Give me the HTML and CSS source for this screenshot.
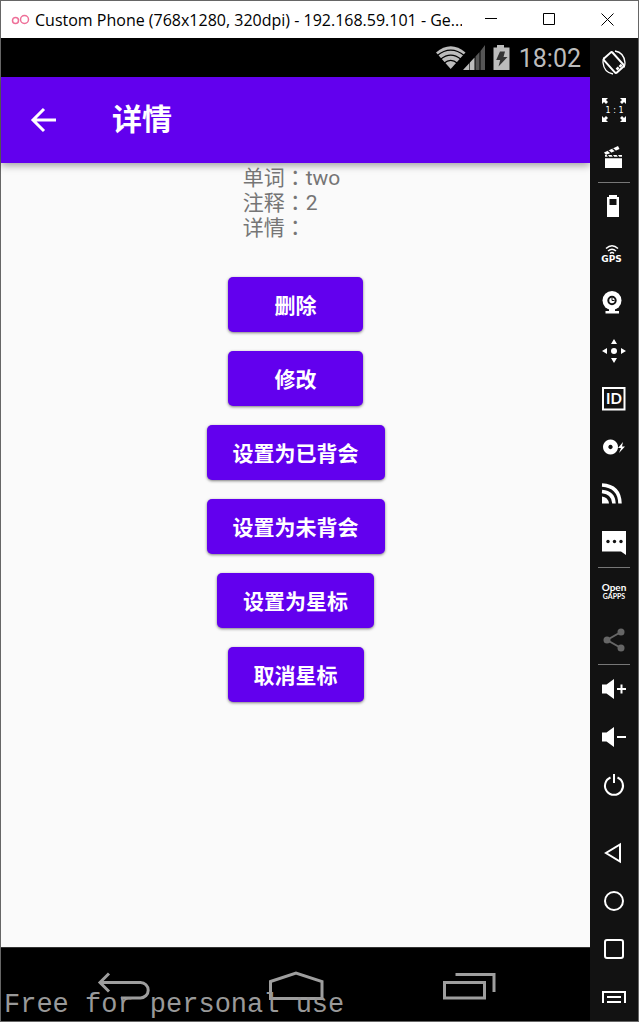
FILE: index.html
```html
<!DOCTYPE html>
<html lang="zh-CN">
<head>
<meta charset="utf-8">
<meta name="viewport" content="width=device-width, initial-scale=1">
<title>详情</title>
<link rel="stylesheet" href="styles.css">
</head>
<body>
<div class="window">
  <header class="titlebar">
    <svg class="logo" viewBox="0 0 20 14" aria-hidden="true"><circle cx="4.5" cy="7.5" r="3"/><circle cx="13.5" cy="6.5" r="4"/></svg>
    <span class="window-title">Custom Phone (768x1280, 320dpi) - 192.168.59.101 - Ge...</span>
    <button class="win-btn" aria-label="Minimize"><svg viewBox="0 0 13 13"><path d="M0 5.5H12"/></svg></button>
    <button class="win-btn" aria-label="Maximize"><svg viewBox="0 0 13 13"><path d="M.5.5h11v11H.5z"/></svg></button>
    <button class="win-btn" aria-label="Close"><svg viewBox="0 0 13 13"><path d="M.5.5l12 12M12.5.5l-12 12"/></svg></button>
  </header>
  <div class="workspace">
    <main class="phone">
      <div class="status">
        <svg class="status-icons" viewBox="0 0 74 26" aria-hidden="true">
          <path fill="#bcbcbc" d="M14.7 24L0 7.5Q14.7-5 29.500 7.500z"/>
          <path class="wifi-gap" d="M1 10.800Q14.700-.5 28.500 10.800M4.500 14.300Q14.700 6 25 14.300M8 18.300Q14.700 12.500 21.500 18.300"/>
          <path fill="#bcbcbc" d="M27 25L38.500 12.500V25z"/>
          <path fill="#555" d="M39.500 11.500L43.500 7V25h-4zM44.500 6L49 0V25h-4.500z"/>
          <path stroke="#000" stroke-width=".6" d="M33.500 16v9"/>
          <path fill="#bcbcbc" d="M57.500 2.500H61V0h7v2.500h5.500V25h-16z"/>
          <path fill="#333" d="M64 6.500h5L67.500 12h4L62.500 21.500l1.700-6.500h-4z"/>
        </svg>
        <time class="clock">18:02</time>
      </div>
      <div class="appbar">
        <button class="back" aria-label="返回"><svg viewBox="0 0 28 28"><path d="M26 14H4M14 3L3 14l11 11"/></svg></button>
        <h1 class="app-title">详情</h1>
      </div>
      <section class="content">
        <div class="details">
          <p>单词<span class="colon" lang="zh-TW">：</span>two</p>
          <p>注释<span class="colon" lang="zh-TW">：</span>2</p>
          <p>详情<span class="colon" lang="zh-TW">：</span></p>
        </div>
        <div class="actions">
          <button class="action">删除</button>
          <button class="action">修改</button>
          <button class="action">设置为已背会</button>
          <button class="action">设置为未背会</button>
          <button class="action">设置为星标</button>
          <button class="action">取消星标</button>
        </div>
      </section>
      <nav class="navbar">
        <button class="nav-btn" aria-label="Back"><svg viewBox="0 0 56 32"><path d="M13 4.500L4 13.500l9 9M4 13.500H44.500a7.700 7.700 0 0 1 0 15.400H25"/></svg></button>
        <button class="nav-btn" aria-label="Home"><svg viewBox="0 0 56 32"><path d="M2.500 12.500L28 4l26 8.500V29.500H2.500z"/></svg></button>
        <button class="nav-btn" aria-label="Recent apps"><svg viewBox="0 0 56 32"><path d="M4.500 13.500h40v15.500h-40zM15.500 5.500H54V23"/></svg></button>
        <span class="watermark">Free for personal use</span>
      </nav>
    </main>
    <aside class="tools">
      <button class="tool" aria-label="Rotate"><svg viewBox="0 0 48 48"><g class="line"><rect x="18" y="15" width="11.500" height="19" rx="1.500" transform="rotate(-42 23.800 24.500)" stroke-width="2"/><path stroke-width="1.300" d="M25 13q9 1.500 10 11.500 0 3-1 5M23 36q-9-1.500-10-11.500 0-3 1-5"/><path stroke-width="2.500" stroke-dasharray="3 1" d="M26.500 31.500l5.500-5"/></g></svg></button>
      <button class="tool" aria-label="Pixel perfect"><svg viewBox="0 0 48 48"><path d="M12 12h6l-2 2 2 2-2 2-2-2-2 2zM36 12h-6l2 2-2 2 2 2 2-2 2 2zM12 36h6l-2-2 2-2-2-2-2 2-2-2zM36 36h-6l2-2-2-2 2-2 2 2 2-2z"/><text x="24.500" y="27" font-size="8" text-anchor="middle">1 : 1</text></svg></button>
      <button class="tool" aria-label="Screencast"><svg viewBox="0 0 48 48"><path d="M15 21h17v13H15z"/><path d="M14 18.500L28 12l1.500 3L16 21z"/><path class="cut" stroke-width="1.300" d="M15 23.500h17M18 16.500l3 2.500M22.500 14.500l3 2.500M17 20.500l2 3M22 20.500l2 3M27 20.500l2 3"/></svg></button>
      <hr>
      <button class="tool" aria-label="Battery"><svg viewBox="0 0 48 48"><path fill-rule="evenodd" d="M19 12h8v2h2v20H17V14h2zM19.500 16v6h7v-6z"/></svg></button>
      <button class="tool" aria-label="GPS"><svg viewBox="0 0 48 48"><path class="line" stroke-width="1.500" d="M16 17.500q6-5.500 12 0M18 20q4-3.500 8 0M20 22.500q2-2 4 0"/><text x="21.500" y="31" font-size="9" font-weight="900" text-anchor="middle">GPS</text></svg></button>
      <button class="tool" aria-label="Camera"><svg viewBox="0 0 48 48"><circle cx="22" cy="21.500" r="9.500"/><path d="M19 29.500h6V32h4v2.500H15.500V32H19z"/><circle class="cut" cx="22" cy="21.500" r="3.700" stroke-width="2"/><path class="cut" d="M22 19v2.500h2.500"/></svg></button>
      <button class="tool" aria-label="Move"><svg viewBox="0 0 48 48"><circle cx="24" cy="24" r="3"/><path d="M24 12l3 5h-6zM24 36l3-5h-6zM12 24l5-3v6zM36 24l-5-3v6z"/></svg></button>
      <button class="tool" aria-label="Identifiers"><svg viewBox="0 0 48 48"><path class="line" stroke-width="2" d="M13 13h21.500v21.500H13z"/><text x="24" y="29" font-size="15" font-weight="700" text-anchor="middle" class="narrow">ID</text></svg></button>
      <button class="tool" aria-label="Disk"><svg viewBox="0 0 48 48"><path fill-rule="evenodd" d="M20.500 16.500a7.500 7.500 0 1 0 .01 0zM20.500 21.800a2.200 2.200 0 1 1-.01 0z"/><path d="M33 19l-5 6h3l-2 5 6-6.500h-3z"/></svg></button>
      <button class="tool" aria-label="Network"><svg viewBox="0 0 48 48"><path class="line" stroke-width="3.500" d="M12 14q17.500 1 18 18.500M12 20.500q11.500 1 12 12"/><path d="M12 25.500q6 .5 7 7h-7z"/></svg></button>
      <button class="tool" aria-label="Messages"><svg viewBox="0 0 48 48"><path d="M12 12h24v24l-5-3.500H12z"/><g fill="#121212"><circle cx="18" cy="22.500" r="1.700"/><circle cx="24.500" cy="22.500" r="1.700"/><circle cx="31" cy="22.500" r="1.700"/></g></svg></button>
      <hr>
      <button class="tool" aria-label="Open GApps"><svg viewBox="0 0 48 48"><text x="24" y="23" font-size="10" font-weight="700" text-anchor="middle" class="narrow">Open</text><text x="24" y="31" font-size="7" font-weight="700" text-anchor="middle" class="narrow">GAPPS</text></svg></button>
      <button class="tool dim" aria-label="Share"><svg viewBox="0 0 48 48"><circle cx="17" cy="24" r="3.500"/><circle cx="31" cy="16" r="3.500"/><circle cx="31" cy="32" r="3.500"/><path class="line" stroke-width="2" d="M31 16L17 24l14 8"/></svg></button>
      <hr>
      <button class="tool" aria-label="Volume up"><svg viewBox="0 0 48 48"><path d="M12 19.500h4.500L24 14v20l-7.500-5.500H12z"/><path class="line" stroke-width="2" d="M27 24h9M31.500 19.500v9"/></svg></button>
      <button class="tool" aria-label="Volume down"><svg viewBox="0 0 48 48"><path d="M12 19.500h4.500L24 14v20l-7.500-5.500H12z"/><path class="line" stroke-width="2" d="M27 24h9"/></svg></button>
      <button class="tool" aria-label="Power"><svg viewBox="0 0 48 48"><path class="line" stroke-width="2" d="M20.500 16.500a9 9 0 1 0 7 0M24 13v9"/></svg></button>
      <button class="tool tool-gap" aria-label="Back"><svg viewBox="0 0 48 48"><path class="line" stroke-width="2" d="M30 15.500v17L16 24z"/></svg></button>
      <button class="tool" aria-label="Home"><svg viewBox="0 0 48 48"><circle class="line" stroke-width="2" cx="24" cy="24" r="9"/></svg></button>
      <button class="tool" aria-label="Recent"><svg viewBox="0 0 48 48"><rect class="line" stroke-width="2" x="15" y="15" width="18" height="18" rx="2"/></svg></button>
      <button class="tool" aria-label="Menu"><svg viewBox="0 0 48 48"><path class="line" stroke-width="2" d="M13 30V19h22v11M17 24h14M17 29h14"/></svg></button>
    </aside>
  </div>
</div>
</body>
</html>
```

FILE: styles.css
```css
* { box-sizing: border-box; }

body {
  margin: 0;
  font-family: Roboto, "Noto Sans CJK SC", sans-serif;
}

button {
  margin: 0;
  padding: 0;
  border: 0;
  background: none;
  color: inherit;
  font: inherit;
}

svg { display: block; }

.window {
  display: flex;
  flex-direction: column;
  min-height: 100vh;
  border: 1px solid #666;
}

.titlebar {
  display: flex;
  align-items: center;
  height: 37px;
  padding-right: 2px;
  padding-left: 10px;
  background: #fff;
  color: #000;
}

.logo {
  flex: none;
  width: 20px;
  height: 14px;
  fill: none;
  stroke: #ee6f98;
  stroke-width: 1.5;
}

.window-title {
  flex: 1;
  min-width: 0;
  padding-left: 4px;
  overflow: hidden;
  white-space: nowrap;
  font: 16px/24px "Open Sans", "Noto Sans", sans-serif;
}

.win-btn {
  display: flex;
  flex: none;
  align-items: center;
  justify-content: center;
  width: 58px;
  height: 37px;
}

.win-btn svg {
  width: 13px;
  height: 13px;
  fill: none;
  stroke: #000;
}

.workspace {
  display: flex;
  flex: 1;
}

.phone {
  display: flex;
  flex: 1;
  flex-direction: column;
  min-width: 0;
  background: #fafafa;
}

.status {
  display: flex;
  align-items: center;
  justify-content: flex-end;
  gap: 9px;
  height: 39px;
  padding-right: 9px;
  background: #000;
  color: #bcbcbc;
}

.status-icons {
  width: 74px;
  height: 26px;
}

.wifi-gap {
  fill: none;
  stroke: #000;
  stroke-width: 1.3;
}

.clock {
  padding-top: 2px;
  font-size: 25px;
  line-height: 37px;
}

.appbar {
  display: flex;
  align-items: center;
  gap: 54px;
  height: 86px;
  padding-left: 29px;
  background: #6200ee;
  color: #fff;
  box-shadow: 0 2px 8px rgba(0, 0, 0, .4);
}

.back svg {
  width: 28px;
  height: 28px;
  fill: none;
  stroke: #fff;
  stroke-width: 3;
}

.app-title {
  margin: 0;
  font-size: 30px;
  line-height: 40px;
  font-weight: 700;
}

.content {
  display: flex;
  flex: 1;
  flex-direction: column;
  align-items: center;
  gap: 36px;
  padding: 3px 0 36px;
}

.details {
  padding-right: 8px;
  color: #757575;
  font-size: 21px;
  line-height: 25px;
}

.details p { margin: 0; }

.colon {
  font-family: "Noto Sans CJK TC", sans-serif;
  line-height: 1;
}

.actions {
  display: flex;
  flex-direction: column;
  align-items: center;
  gap: 19px;
}

.action {
  min-width: 135px;
  height: 55px;
  padding: 0 26px 2px;
  border-radius: 5px;
  background: #6200ee;
  box-shadow: 0 1px 3px rgba(0, 0, 0, .5);
  color: #fff;
  font-size: 21px;
  font-weight: 700;
}

.navbar {
  position: relative;
  display: flex;
  align-items: center;
  justify-content: center;
  height: 74px;
  border-top: 1px solid #333;
  background: #000;
}

.nav-btn {
  display: flex;
  flex: 0 1 172px;
  justify-content: center;
}

.nav-btn svg {
  width: 56px;
  height: 32px;
  fill: none;
  stroke: #9e9e9e;
  stroke-width: 3;
}

.watermark {
  position: absolute;
  left: 3px;
  bottom: 0;
  color: #999;
  font: 27px/32px "Liberation Mono", monospace;
  white-space: nowrap;
}

.tools {
  flex: none;
  width: 48px;
  background: #121212;
}

.tools hr {
  height: 1px;
  margin: 0 8px;
  border: 0;
  background: #777;
}

.tool {
  display: block;
  width: 48px;
  height: 48px;
  color: #fff;
}

.tool svg {
  width: 48px;
  height: 48px;
  fill: currentColor;
  font-family: "DejaVu Sans", sans-serif;
}

.tool .narrow { font-family: Lato, sans-serif; }

.tool .line {
  fill: none;
  stroke: currentColor;
}

.tool .cut {
  fill: none;
  stroke: #121212;
}

.dim { color: #666; }

.tool-gap { margin-top: 20px; }
```
